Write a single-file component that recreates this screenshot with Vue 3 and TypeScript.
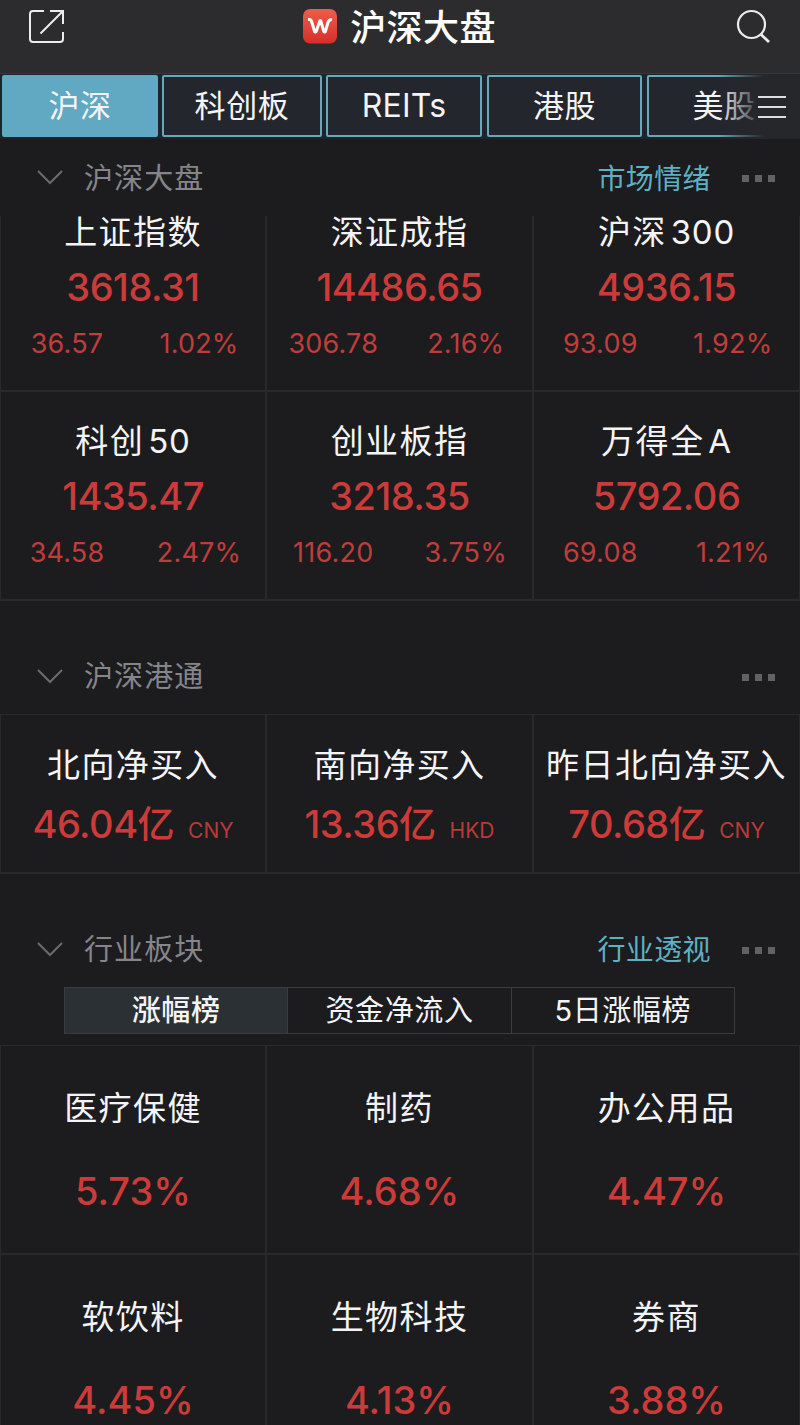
<script setup lang="ts">
interface Quote { name: string; suffix?: string; value: string; change: string; pct: string }
interface Flow { name: string; value: string; currency: string }
interface Sector { name: string; pct: string }

const tabs: string[] = ['沪深', '科创板', 'REITs', '港股', '美股']
const quotes: Quote[] = [
  { name: '上证指数', value: '3618.31', change: '36.57', pct: '1.02%' },
  { name: '深证成指', value: '14486.65', change: '306.78', pct: '2.16%' },
  { name: '沪深', suffix: '300', value: '4936.15', change: '93.09', pct: '1.92%' },
  { name: '科创', suffix: '50', value: '1435.47', change: '34.58', pct: '2.47%' },
  { name: '创业板指', value: '3218.35', change: '116.20', pct: '3.75%' },
  { name: '万得全', suffix: 'A', value: '5792.06', change: '69.08', pct: '1.21%' },
]
const flows: Flow[] = [
  { name: '北向净买入', value: '46.04', currency: 'CNY' },
  { name: '南向净买入', value: '13.36', currency: 'HKD' },
  { name: '昨日北向净买入', value: '70.68', currency: 'CNY' },
]
const ranks: string[] = ['涨幅榜', '资金净流入', '5日涨幅榜']
const sectors: Sector[] = [
  { name: '医疗保健', pct: '5.73%' },
  { name: '制药', pct: '4.68%' },
  { name: '办公用品', pct: '4.47%' },
  { name: '软饮料', pct: '4.45%' },
  { name: '生物科技', pct: '4.13%' },
  { name: '券商', pct: '3.88%' },
]
</script>

<template>
  <div class="app">
    <header class="topbar">
      <svg class="share" width="38" height="36" viewBox="0 0 38 36" fill="none" stroke="#ececee" stroke-width="2">
        <path d="M16 2H5Q2 2 2 5V30Q2 33 5 33H32Q35 33 35 30V23" />
        <path d="M22 2H35V15M35 2L12.500 24.500" />
      </svg>
      <div class="brand">
        <svg width="34" height="35" viewBox="0 0 34 35">
          <defs>
            <linearGradient id="logo" x1="0" y1="0" x2="0" y2="1">
              <stop offset="0" stop-color="#ec5d4c" />
              <stop offset="1" stop-color="#d62f29" />
            </linearGradient>
          </defs>
          <rect width="34" height="34.500" rx="7" fill="url(#logo)" />
          <path d="M5 10.500H6.500Q8 10.500 8.600 12.500L11.800 23H13L17 11.500H17.600L21 23H22.200L25 13.500Q26 10.300 29 10.900" fill="none" stroke="#fff" stroke-width="3" stroke-linejoin="bevel" />
        </svg>
        <h1>沪深大盘</h1>
      </div>
      <svg class="search" width="36" height="36" viewBox="0 0 36 36" fill="none" stroke="#ececee" stroke-width="2.200">
        <circle cx="15.500" cy="15.500" r="13.500" />
        <path d="M24.500 25L33 33" stroke-width="2.800" />
      </svg>
    </header>

    <nav class="tabs">
      <div v-for="(t, i) in tabs" :key="t" class="tab" :class="['t' + i, { active: i === 0 }]"><span>{{ t }}</span></div>
      <div class="more">
        <svg width="28" height="24" viewBox="0 0 28 24" stroke="#dcdde0" stroke-width="2"><path d="M0 2H28M0 12H28M0 22H28" /></svg>
      </div>
    </nav>

    <section>
      <div class="head h1st">
        <svg class="chev" width="26" height="15" viewBox="0 0 26 15"><path d="M1 1L13 13L25 1" /></svg>
        <h2>沪深大盘</h2>
        <a>市场情绪</a>
        <div class="dots"><i /><i /><i /></div>
      </div>
      <div class="grid quotes">
        <div v-for="q in quotes" :key="q.value" class="cell">
          <div class="name">{{ q.name }}<span v-if="q.suffix" class="suffix">{{ q.suffix }}</span></div>
          <div class="value">{{ q.value }}</div>
          <div class="delta"><span>{{ q.change }}</span><span>{{ q.pct }}</span></div>
        </div>
      </div>
    </section>

    <section>
      <div class="head h2nd">
        <svg class="chev" width="26" height="15" viewBox="0 0 26 15"><path d="M1 1L13 13L25 1" /></svg>
        <h2>沪深港通</h2>
        <div class="dots"><i /><i /><i /></div>
      </div>
      <div class="grid flows">
        <div v-for="f in flows" :key="f.name" class="cell">
          <div class="name">{{ f.name }}</div>
          <div class="value">{{ f.value }}<span class="yi">亿</span><small>{{ f.currency }}</small></div>
        </div>
      </div>
    </section>

    <section>
      <div class="head h3rd">
        <svg class="chev" width="26" height="15" viewBox="0 0 26 15"><path d="M1 1L13 13L25 1" /></svg>
        <h2>行业板块</h2>
        <a>行业透视</a>
        <div class="dots"><i /><i /><i /></div>
      </div>
      <div class="seg">
        <div v-for="(r, i) in ranks" :key="r" :class="{ on: i === 0 }">{{ r }}</div>
      </div>
      <div class="grid sectors">
        <div v-for="s in sectors" :key="s.name" class="cell">
          <div class="name">{{ s.name }}</div>
          <div class="value">{{ s.pct }}</div>
        </div>
      </div>
    </section>
  </div>
</template>

<style>
body { background: #1c1c1e; }
</style>

<style scoped>
* { box-sizing: border-box; }
.app {
  width: 800px;
  height: 1425px;
  overflow: hidden;
  background: #1c1c1e;
  color: #f4f4f6;
  font-family: Inter, "Noto Sans CJK SC", sans-serif;
  white-space: nowrap;
}
h1, h2 { margin: 0; font-weight: 400; }
.topbar {
  height: 74px;
  background: #2c2c2e;
  display: flex;
  justify-content: space-between;
  padding: 9px 29px 0 28px;
  border-bottom: 1px solid #36383b;
}
.brand { display: flex; margin-right: 3px; }
.brand h1 {
  font-size: 36px;
  line-height: 38px;
  font-weight: 500;
  letter-spacing: 0.4px;
  margin-left: 13px;
  color: #fff;
}
.search { margin-right: -1px; }
.tabs {
  position: relative;
  height: 65px;
  background: #1d252c;
  display: flex;
  gap: 4px;
  padding: 1px 0 2px 2px;
  overflow: hidden;
}
.tab {
  flex: none;
  width: 156px;
  height: 62px;
  border: 2px solid #68a8ba;
  border-radius: 2px;
  background: #23262d;
  font-size: 31px;
  letter-spacing: 0.6px;
  line-height: 57px;
  text-align: center;
}
.tab.active { background: #61a8c2; border-color: #61a8c2; }
.t1 { width: 160px; }
.t2 { font-size: 32px; letter-spacing: 0.2px; }
.t3 { margin-left: 1px; width: 155px; }
.t4 { margin-left: 1px; width: 154px; }
.more {
  position: absolute;
  right: 0;
  top: 0;
  width: 92px;
  height: 65px;
  padding: 20.500px 0 0 49.500px;
  background: linear-gradient(to right, #25272b00 10px, #25272b 56px);
}
.head { display: flex; align-items: center; padding: 2px 25px 0 37px; height: 77px; }
.h2nd { height: 113px; padding-top: 39px; }
.h3rd { height: 114px; padding-top: 38px; }
.chev { fill: none; stroke: #6b6b6f; stroke-width: 2; margin-top: -2px; }
.head h2 { margin-left: 21px; font-size: 29px; letter-spacing: 1.1px; color: #85858a; line-height: 40px; }
.head a { margin-left: auto; font-size: 28px; letter-spacing: 0.4px; color: #5fb0c4; line-height: 40px; }
.dots { display: flex; gap: 6px; margin-left: 31px; }
h2 + .dots { margin-left: auto; }
.dots i { width: 7px; height: 7px; background: #626265; }
.grid {
  display: grid;
  grid-template-columns: 266px 267px 265px;
  border-left: 1px solid #29292c;
  border-right: 1px solid #29292c;
  text-align: center;
}
.cell { border-right: 2px solid #29292c; border-bottom: 2px solid #29292c; }
.cell:nth-child(3n) { border-right: 0; }
.quotes { grid-template-rows: 176px 209px; }
.name { font-size: 33px; letter-spacing: 1.4px; line-height: 48px; }
.suffix { margin-left: 4px; letter-spacing: 0.8px; }
.value { color: #cb3b39; font-size: 38px; font-weight: 500; line-height: 48px; letter-spacing: -0.5px; }
.delta { display: grid; grid-template-columns: 1fr 1fr; color: #c03d3b; font-size: 27px; line-height: 34px; letter-spacing: 0.2px; }
.quotes .name { margin-top: 25px; }
.quotes .cell:nth-child(-n + 3) .name { margin-top: 0; line-height: 33px; height: 40px; }
.quotes .value { margin-top: 7px; }
.quotes .cell:nth-child(-n + 3) .value { margin-top: 7px; }
.quotes .delta { margin-top: 16px; }
.flows { border-top: 1px solid #29292c; grid-auto-rows: 159px; }
.flows .name { margin-top: 26px; }
.flows .value { margin-top: 11px; }
.flows small { margin-left: 14px; font-size: 21px; font-weight: 400; letter-spacing: 0; color: #b83b39; }
.yi { font-size: 37px; }
.seg { display: flex; width: 671px; height: 47px; margin: -1px 0 11px 64px; border: 1px solid #3a3c3f; }
.seg div { flex: 1; font-size: 29px; letter-spacing: 0.6px; line-height: 46px; text-align: center; }
.seg div + div { border-left: 1px solid #3a3c3f; }
.seg .on { background: #2b3034; font-weight: 500; }
.sectors { border-top: 1px solid #29292c; grid-auto-rows: 208.500px; }
.sectors .name { margin-top: 38px; }
.sectors .value { margin-top: 35px; letter-spacing: 0; }
</style>
